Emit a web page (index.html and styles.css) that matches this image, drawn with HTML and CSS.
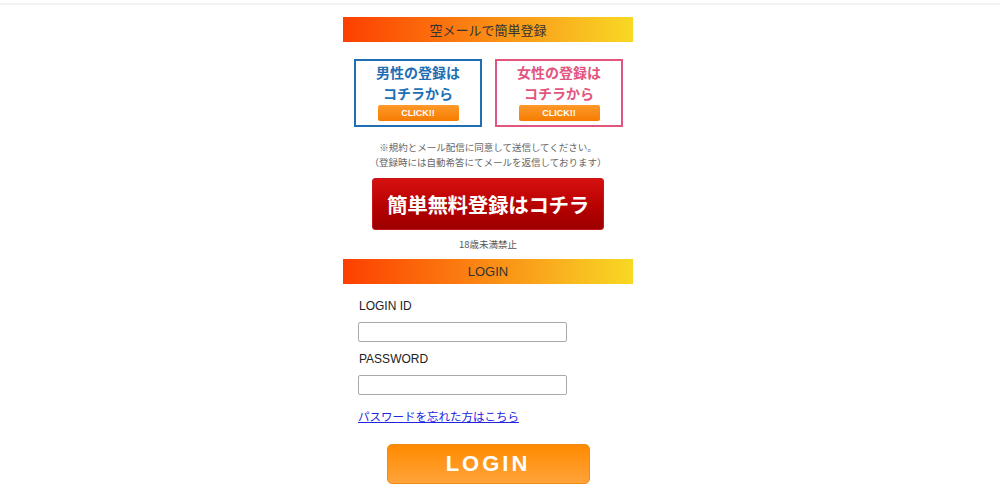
FILE: index.html
```html
<!DOCTYPE html>
<html lang="ja">
<head>
<meta charset="utf-8">
<link rel="stylesheet" href="styles.css">
</head>
<body>
<div class="topline"></div>
<div class="wrap">
  <div class="bar">空メールで簡単登録</div>
  <div class="boxes">
    <a class="box male" href="#">
      <span class="box-title">男性の登録は</span>
      <span class="box-title">コチラから</span>
      <span class="click">CLICK!!</span>
    </a>
    <a class="box female" href="#">
      <span class="box-title">女性の登録は</span>
      <span class="box-title">コチラから</span>
      <span class="click">CLICK!!</span>
    </a>
  </div>
  <p class="note">※規約とメール配信に同意して送信してください。<br>（登録時には自動希答にてメールを返信しております）</p>
  <a class="bigbtn" href="#">簡単無料登録はコチラ</a>
  <p class="age">18歳未満禁止</p>
  <div class="bar bar-login">LOGIN</div>
  <form class="login">
    <label class="lbl">LOGIN ID</label>
    <input class="inp" type="text">
    <label class="lbl lbl2">PASSWORD</label>
    <input class="inp" type="password">
    <a class="forgot" href="#">パスワードを忘れた方はこちら</a>
    <button class="loginbtn" type="button">LOGIN</button>
  </form>
</div>
</body>
</html>
```

FILE: styles.css
```css
html, body {
  margin: 0;
  padding: 0;
  background: #fff;
  font-family: "Noto Sans CJK JP", "Liberation Sans", sans-serif;
  color: #333;
}
.topline {
  height: 2px;
  margin-top: 3px;
  background: #f3f3f3;
}
.wrap {
  width: 290px;
  margin-left: calc(50% - 157px);
  padding-top: 12px;
  display: flex;
  flex-direction: column;
}
.bar {
  height: 25px;
  background: linear-gradient(to right, #fd3f00 0%, #fb7b10 40%, #f9b21e 75%, #f8d923 100%);
  color: #333;
  font-size: 13px;
  line-height: 25px;
  text-align: center;
}
.boxes {
  display: flex;
  gap: 13px;
  margin: 17px 0 0 11px;
}
.box {
  box-sizing: border-box;
  width: 128px;
  height: 68px;
  border: 2px solid #1f6fb4;
  display: flex;
  flex-direction: column;
  align-items: center;
  text-decoration: none;
  padding-top: 1px;
}
.female { border-color: #e2557f; }
.box-title {
  display: block;
  font-weight: bold;
  font-size: 14px;
  line-height: 20.5px;
  color: #1f6fb4;
  text-align: center;
}
.female .box-title { color: #e2557f; }
.click {
  margin-top: 2px;
  width: 81px;
  height: 16px;
  border-radius: 2px;
  background: linear-gradient(#fe9a2b, #f57c00);
  color: #fff;
  font-family: "Liberation Sans", sans-serif;
  font-weight: bold;
  font-size: 9px;
  line-height: 16px;
  text-align: center;
}
.note {
  margin: 13px 0 0;
  font-size: 9.5px;
  line-height: 15px;
  color: #666;
  text-align: center;
}
.bigbtn {
  align-self: center;
  margin-top: 8px;
  width: 232px;
  height: 52px;
  box-sizing: border-box;
  border: 1px solid #c41818;
  border-radius: 3px;
  background: linear-gradient(#d70f0f, #b30000 60%, #9c0000);
  color: #fff;
  font-weight: bold;
  font-size: 20.5px;
  line-height: 50px;
  text-align: center;
  text-decoration: none;
  letter-spacing: -0.3px;
}
.age {
  margin: 7px 0 0;
  font-size: 9.5px;
  line-height: 14px;
  color: #555;
  text-align: center;
}
.bar-login {
  margin-top: 8px;
  font-family: "Liberation Sans", sans-serif;
  font-size: 13px;
}
.login {
  display: flex;
  flex-direction: column;
  align-items: flex-start;
  padding-left: 15px;
}
.lbl {
  margin: 15px 0 0 1px;
  font-family: "Liberation Sans", sans-serif;
  font-size: 12px;
  line-height: 14px;
  color: #222;
}
.lbl2 { margin-top: 10px; }
.inp {
  box-sizing: border-box;
  margin: 9px 0 0;
  width: 209px;
  height: 20px;
  border: 1px solid #a9a9a9;
  border-radius: 2px;
  padding: 0;
}
.forgot {
  margin-top: 13px;
  font-size: 11.5px;
  line-height: 16px;
  color: #2323e0;
  text-decoration: underline;
}
.loginbtn {
  align-self: center;
  margin: 20px 0 0 -15px;
  width: 203px;
  height: 40px;
  border: 1px solid #f08a16;
  border-radius: 5px;
  background: linear-gradient(#ff8a00, #ffa33a);
  color: #fff;
  font-family: "Liberation Sans", sans-serif;
  font-weight: bold;
  font-size: 22px;
  letter-spacing: 3px;
  padding: 0;
}
```
